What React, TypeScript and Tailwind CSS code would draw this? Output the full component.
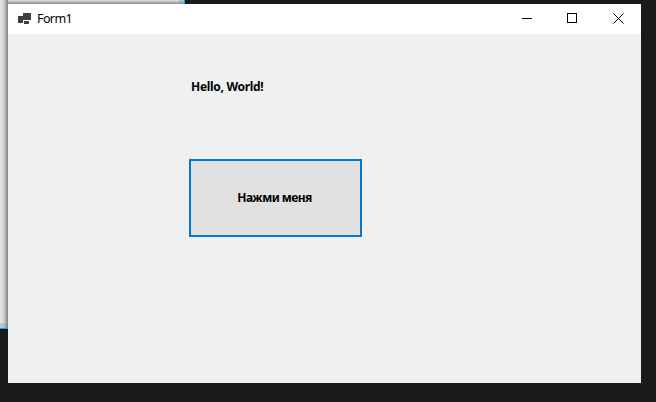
const App = () => {
  return (
    <div className="relative w-[656px] h-[402px] overflow-hidden bg-[#1a1a1a] pt-1 pl-2 font-['Noto_Sans','Open_Sans',sans-serif] text-black">
      {/* window behind the form */}
      <div className="absolute left-0 top-0 w-[8px] h-[323px] bg-gradient-to-r from-[#e6e6e6] via-[#d0d0d0] to-[#808080]" />
      <div className="absolute left-0 top-[323px] w-[8px] h-[6px] bg-gradient-to-r from-[#b4cae4] via-[#a9bfd8] to-[#6f8196] border-b border-[#1fa5c4]" />
      <div className="absolute left-[8px] top-0 w-[171px] h-[4px] bg-gradient-to-b from-[#e2e2e2] to-[#8c8c8c]" />
      <div className="absolute left-[179px] top-0 w-[6px] h-[4px] bg-gradient-to-b from-[#b4cae4] to-[#7d90a6] border-r border-[#1fa5c4]" />

      <div className="relative w-[633px] h-[379px] flex flex-col bg-[#f0f0f0]">
        <div className="h-[30px] shrink-0 bg-white flex items-center">
          <svg width="13" height="11" viewBox="0 0 13 11" className="ml-[10px] mb-[2px] shrink-0" fill="#404040">
            <rect x="0" y="3" width="5" height="7" />
            <rect x="5" y="0" width="8" height="7" />
            <rect x="6" y="8" width="5" height="3" />
          </svg>
          <span className="ml-[6px] mt-[1px] text-[12.5px] leading-none tracking-[-0.6px]">Form1</span>
          <div className="ml-auto flex h-full">
            <button className="w-[46px] h-full flex items-center justify-center">
              <svg width="10" height="10" viewBox="0 0 10 10" stroke="#000" fill="none" className="mb-[2px] ml-[1px]">
                <path d="M0 5.5H10" />
              </svg>
            </button>
            <button className="w-[46px] h-full flex items-center justify-center">
              <svg width="10" height="10" viewBox="0 0 10 10" stroke="#000" fill="none" className="mb-[2px]">
                <rect x="0.5" y="0.5" width="9" height="9" />
              </svg>
            </button>
            <button className="w-[46px] h-full flex items-center justify-center">
              <svg width="11" height="11" viewBox="0 0 11 11" stroke="#000" fill="none" className="mb-[2px]">
                <path d="M0.5 0.5L10.5 10.5M10.5 0.5L0.5 10.5" />
              </svg>
            </button>
          </div>
        </div>
        <div className="flex-1 pl-[181px] flex flex-col items-start">
          <span className="mt-[45px] ml-[2px] text-[12px] font-bold leading-[16px] tracking-[-0.3px]">Hello, World!</span>
          <button className="mt-[64px] pr-[2px] w-[173px] h-[78px] border-2 border-[#0078d7] bg-[#e1e1e1] text-[12px] font-bold tracking-[-0.55px] flex items-center justify-center">
            Нажми меня
          </button>
        </div>
      </div>
    </div>
  );
};

export default App;
